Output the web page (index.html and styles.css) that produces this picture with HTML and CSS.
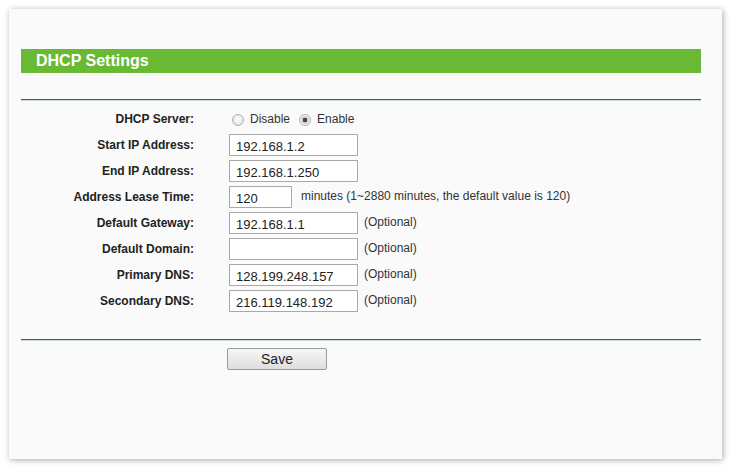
FILE: index.html
```html
<!DOCTYPE html>
<html lang="en">
<head>
    <meta charset="UTF-8">
    <title>DHCP Settings</title>
    <link rel="stylesheet" href="styles.css">
</head>
<body>
    <div class="panel">
        <h1 class="title">DHCP Settings</h1>
        <hr class="rule">

        <form class="settings">
            <label class="name">DHCP Server:</label>
            <div class="field">
                <label class="choice"><input type="radio" name="dhcp" value="0"> Disable</label>
                <label class="choice"><input type="radio" name="dhcp" value="1" checked> Enable</label>
            </div>

            <label class="name" for="start_ip">Start IP Address:</label>
            <div class="field"><input type="text" id="start_ip" value="192.168.1.2"></div>

            <label class="name" for="end_ip">End IP Address:</label>
            <div class="field"><input type="text" id="end_ip" value="192.168.1.250"></div>

            <label class="name" for="lease">Address Lease Time:</label>
            <div class="field"><input type="text" id="lease" class="short" value="120"><span class="hint hint-lease">minutes (1~2880 minutes, the default value is 120)</span></div>

            <label class="name" for="gateway">Default Gateway:</label>
            <div class="field"><input type="text" id="gateway" value="192.168.1.1"><span class="hint">(Optional)</span></div>

            <label class="name" for="domain">Default Domain:</label>
            <div class="field"><input type="text" id="domain" value=""><span class="hint">(Optional)</span></div>

            <label class="name" for="dns1">Primary DNS:</label>
            <div class="field"><input type="text" id="dns1" value="128.199.248.157"><span class="hint">(Optional)</span></div>

            <label class="name" for="dns2">Secondary DNS:</label>
            <div class="field"><input type="text" id="dns2" value="216.119.148.192"><span class="hint">(Optional)</span></div>
        </form>

        <hr class="rule rule-bottom">

        <div class="actions">
            <button type="button" class="save">Save</button>
        </div>
    </div>
</body>
</html>
```

FILE: styles.css
```css
body {
    margin: 0;
    background: #fff;
    font-family: "Liberation Sans", Arial, sans-serif;
    color: #333;
}
.panel {
    margin: 9px;
    width: 713px;
    height: 450px;
    box-sizing: border-box;
    padding: 40px 21px 0 12px;
    background: #fafafa;
    box-shadow: 1px 1px 6px rgba(0, 0, 0, 0.35);
}
.title {
    margin: 0;
    height: 24px;
    line-height: 23px;
    padding-left: 15px;
    background: #6ab935;
    color: #fff;
    font-size: 16px;
    font-weight: bold;
}
.rule {
    margin: 26px 0 0;
    border: none;
    height: 1px;
    background: #2e6a4c;
    box-shadow: 0 1px 0 #c5dccf;
}
.rule-bottom {
    margin-top: 25px;
}
.settings {
    display: grid;
    grid-template-columns: 173px 1fr;
    grid-auto-rows: 26px;
    column-gap: 35px;
    margin-top: 6px;
}
.name {
    display: flex;
    align-items: center;
    justify-content: flex-end;
    font-size: 12px;
    font-weight: bold;
    color: #222;
}
.field {
    display: flex;
    align-items: center;
    font-size: 12px;
}
.field input[type="text"] {
    box-sizing: border-box;
    width: 129px;
    height: 22px;
    margin: 0;
    padding: 2px 6px 0;
    border: 1px solid #a9a9a9;
    background: #fff;
    font-family: "Liberation Sans", Arial, sans-serif;
    font-size: 13px;
    color: #222;
}
.field input.short {
    width: 63px;
}
.hint {
    margin-left: 6px;
    margin-top: -3px;
    color: #333;
}
.hint-lease {
    margin-left: 9px;
}
.choice {
    display: flex;
    align-items: center;
    margin-right: 6px;
    margin-top: -1px;
    color: #333;
}
.choice input {
    appearance: none;
    box-sizing: border-box;
    width: 12px;
    height: 12px;
    margin: 2px 6px 0 3px;
    border: 1px solid #b0b0b0;
    border-radius: 50%;
    background: radial-gradient(circle at 50% 40%, #fdfdfd, #dcdcdc);
}
.choice input:checked {
    background: radial-gradient(circle, #444 0 2px, #c8c8c8 2.5px, #f4f4f4 5px);
}
.actions {
    padding: 8px 0 0 206px;
}
.save {
    width: 100px;
    height: 22px;
    padding: 0;
    border: 1px solid #9a9a9a;
    border-radius: 2px;
    background: linear-gradient(#f6f6f6, #dedede);
    font-family: "Liberation Sans", Arial, sans-serif;
    font-size: 14px;
    color: #222;
}
```
